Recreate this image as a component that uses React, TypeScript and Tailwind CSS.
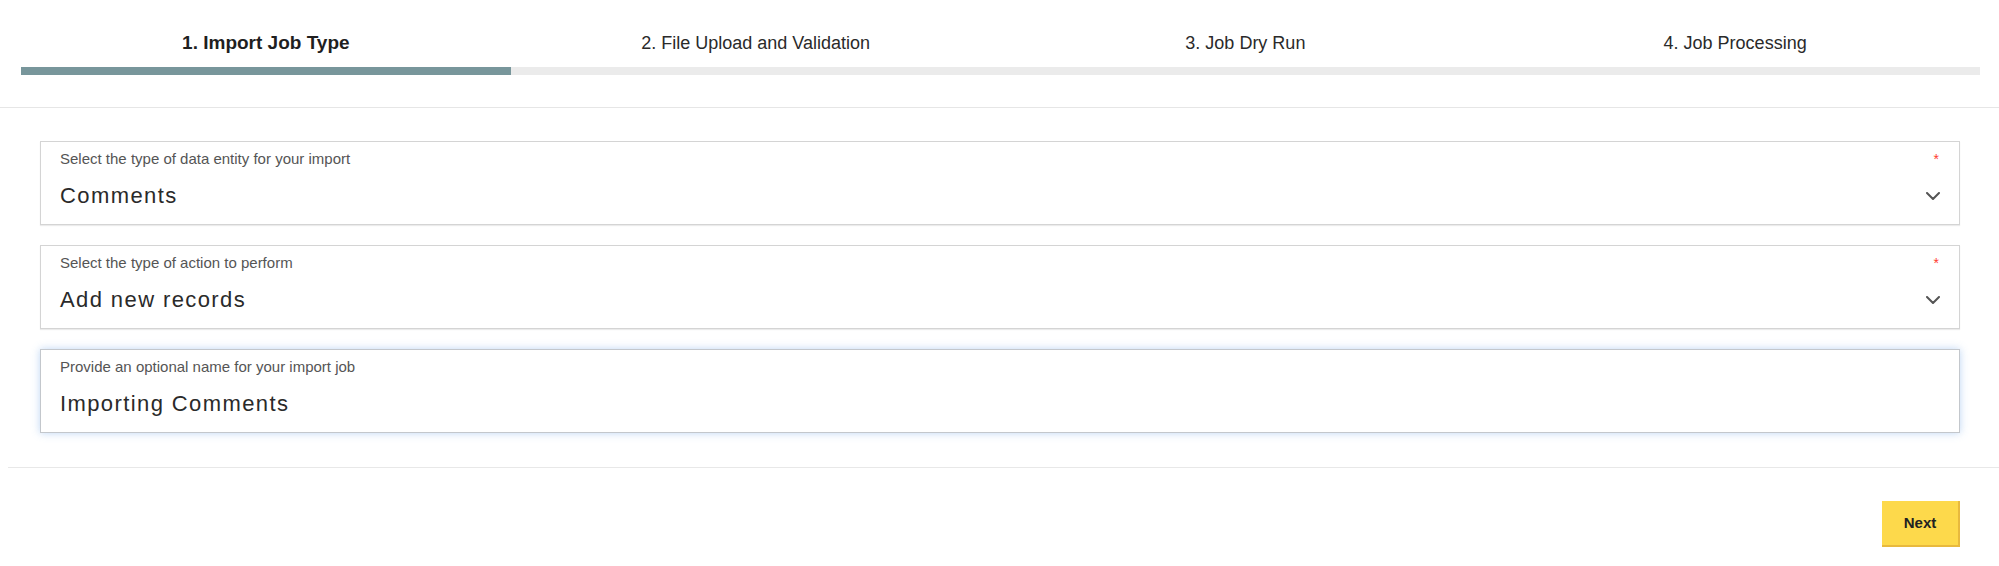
import React from "react";

const steps = [
    { label: "1. Import Job Type", active: true },
    { label: "2. File Upload and Validation", active: false },
    { label: "3. Job Dry Run", active: false },
    { label: "4. Job Processing", active: false },
];

function Chevron() {
    return (
        <svg width="14" height="8" viewBox="0 0 14 8" fill="none">
            <path d="M1 1l6 6 6-6" stroke="#555" strokeWidth="2" strokeLinecap="round" strokeLinejoin="round" />
        </svg>
    );
}

interface FieldProps {
    label: string;
    value: string;
    required?: boolean;
    select?: boolean;
    focused?: boolean;
}

function Field({ label, value, required, select, focused }: FieldProps) {
    return (
        <div
            className={`bg-white border px-[19px] pt-[8px] pb-[15px] ${
                focused
                    ? "border-[#c3c7cc] shadow-[0_0_8px_rgba(110,165,230,0.45)]"
                    : "border-[#d4d4d4] shadow-[0_1px_1px_rgba(0,0,0,0.08)]"
            }`}
        >
            <div className="flex items-center justify-between h-[18px]">
                <span className="text-[15px] leading-[18px] text-[#555]">{label}</span>
                {required && <span className="text-[14px] leading-[18px] text-[#ff3b30] mr-[1px]">*</span>}
            </div>
            <div className="mt-[15px] flex items-center justify-between h-[26px]">
                <span className="text-[22px] leading-[26px] tracking-[1.4px] text-[#2a2a2a]">{value}</span>
                {select && <Chevron />}
            </div>
        </div>
    );
}

export default function App() {
    return (
        <div className="w-[1999px] h-[566px] bg-white font-['Liberation_Sans',Arial,sans-serif]">
            {/* Stepper */}
            <div className="grid grid-cols-4 ml-[21px] w-[1959px] pt-[32px]">
                {steps.map((s) => (
                    <div key={s.label}>
                        <div
                            className={`h-[22px] leading-[22px] text-center ${
                                s.active ? "text-[19px] font-bold text-[#1f1f1f]" : "text-[18px] text-[#2a2a2a]"
                            }`}
                        >
                            {s.label}
                        </div>
                        <div className={`mt-[13px] h-[8px] ${s.active ? "bg-[#78969b]" : "bg-[#ebebeb]"}`} />
                    </div>
                ))}
            </div>

            <div className="mt-[32px] h-px bg-[#e6e6e6]" />

            {/* Form */}
            <div className="ml-[40px] w-[1920px] pt-[33px] flex flex-col gap-[20px]">
                <Field label="Select the type of data entity for your import" value="Comments" required select />
                <Field label="Select the type of action to perform" value="Add new records" required select />
                <Field label="Provide an optional name for your import job" value="Importing Comments" focused />
            </div>

            <div className="mt-[34px] ml-[8px] h-px bg-[#e8e8e8]" />

            <div className="ml-[40px] w-[1920px] mt-[33px] flex justify-end">
                <button className="w-[78px] h-[46px] bg-[#fdd94b] border-r-2 border-b-2 border-[#e8b93d] text-[15px] font-bold text-[#222]">
                    Next
                </button>
            </div>
        </div>
    );
}
